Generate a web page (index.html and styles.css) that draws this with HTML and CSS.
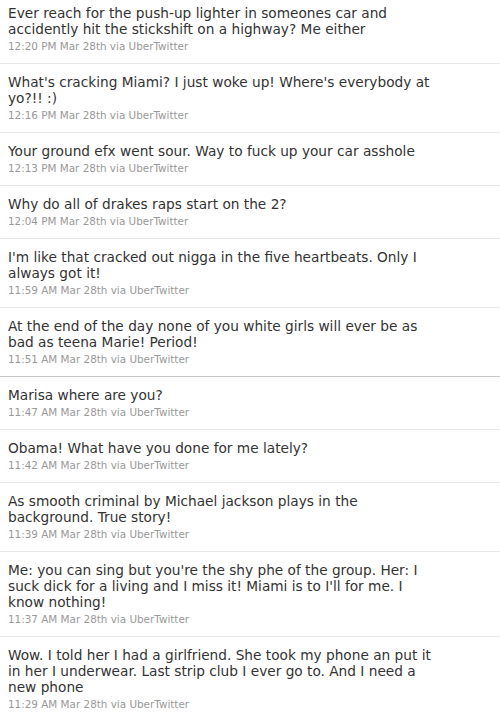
FILE: index.html
```html
<!DOCTYPE html>
<html lang="en">

<head>
  <meta charset="UTF-8">
  <meta name="viewport" content="width=device-width, initial-scale=1.0">
  <title>Tweets</title>
  <link rel="stylesheet" href="styles.css">
</head>

<body>
  <ul class="timeline">
    <li class="tweet">
      <p class="text">Ever reach for the push-up lighter in someones car and<br>accidently hit the stickshift on a highway? Me either</p>
      <p class="meta">12:20 PM Mar 28th via UberTwitter</p>
    </li>
    <li class="tweet">
      <p class="text">What's cracking Miami? I just woke up! Where's everybody at<br>yo?!! :)</p>
      <p class="meta">12:16 PM Mar 28th via UberTwitter</p>
    </li>
    <li class="tweet">
      <p class="text">Your ground efx went sour. Way to fuck up your car asshole</p>
      <p class="meta">12:13 PM Mar 28th via UberTwitter</p>
    </li>
    <li class="tweet">
      <p class="text">Why do all of drakes raps start on the 2?</p>
      <p class="meta">12:04 PM Mar 28th via UberTwitter</p>
    </li>
    <li class="tweet">
      <p class="text">I'm like that cracked out nigga in the five heartbeats. Only I<br>always got it!</p>
      <p class="meta">11:59 AM Mar 28th via UberTwitter</p>
    </li>
    <li class="tweet page-end">
      <p class="text">At the end of the day none of you white girls will ever be as<br>bad as teena Marie! Period!</p>
      <p class="meta">11:51 AM Mar 28th via UberTwitter</p>
    </li>
    <li class="tweet">
      <p class="text">Marisa where are you?</p>
      <p class="meta">11:47 AM Mar 28th via UberTwitter</p>
    </li>
    <li class="tweet">
      <p class="text">Obama! What have you done for me lately?</p>
      <p class="meta">11:42 AM Mar 28th via UberTwitter</p>
    </li>
    <li class="tweet">
      <p class="text">As smooth criminal by Michael jackson plays in the<br>background. True story!</p>
      <p class="meta">11:39 AM Mar 28th via UberTwitter</p>
    </li>
    <li class="tweet">
      <p class="text">Me: you can sing but you're the shy phe of the group. Her: I<br>suck dick for a living and I miss it! Miami is to I'll for me. I<br>know nothing!</p>
      <p class="meta">11:37 AM Mar 28th via UberTwitter</p>
    </li>
    <li class="tweet">
      <p class="text">Wow. I told her I had a girlfriend. She took my phone an put it<br>in her I underwear. Last strip club I ever go to. And I need a<br>new phone</p>
      <p class="meta">11:29 AM Mar 28th via UberTwitter</p>
    </li>
  </ul>
</body>

</html>
```

FILE: styles.css
```css
* {
  margin: 0;
  padding: 0;
}

li {
  list-style: none;
}

body {
  background-color: white;
  font-family: "Lucida Grande", "DejaVu Sans", sans-serif;
  overflow: hidden;
}

.timeline {
  margin-top: -5px;
}

.tweet {
  padding: 10px 8px 8px 8px;
  border-bottom: 1px solid #e8e8e8;
}

.tweet.page-end {
  border-bottom-color: #c8c8c8;
}

.text {
  font-size: 13.7px;
  line-height: 16px;
  color: #333;
  white-space: nowrap;
}

.meta {
  font-size: 10.4px;
  line-height: 18px;
  color: #999;
}
```
